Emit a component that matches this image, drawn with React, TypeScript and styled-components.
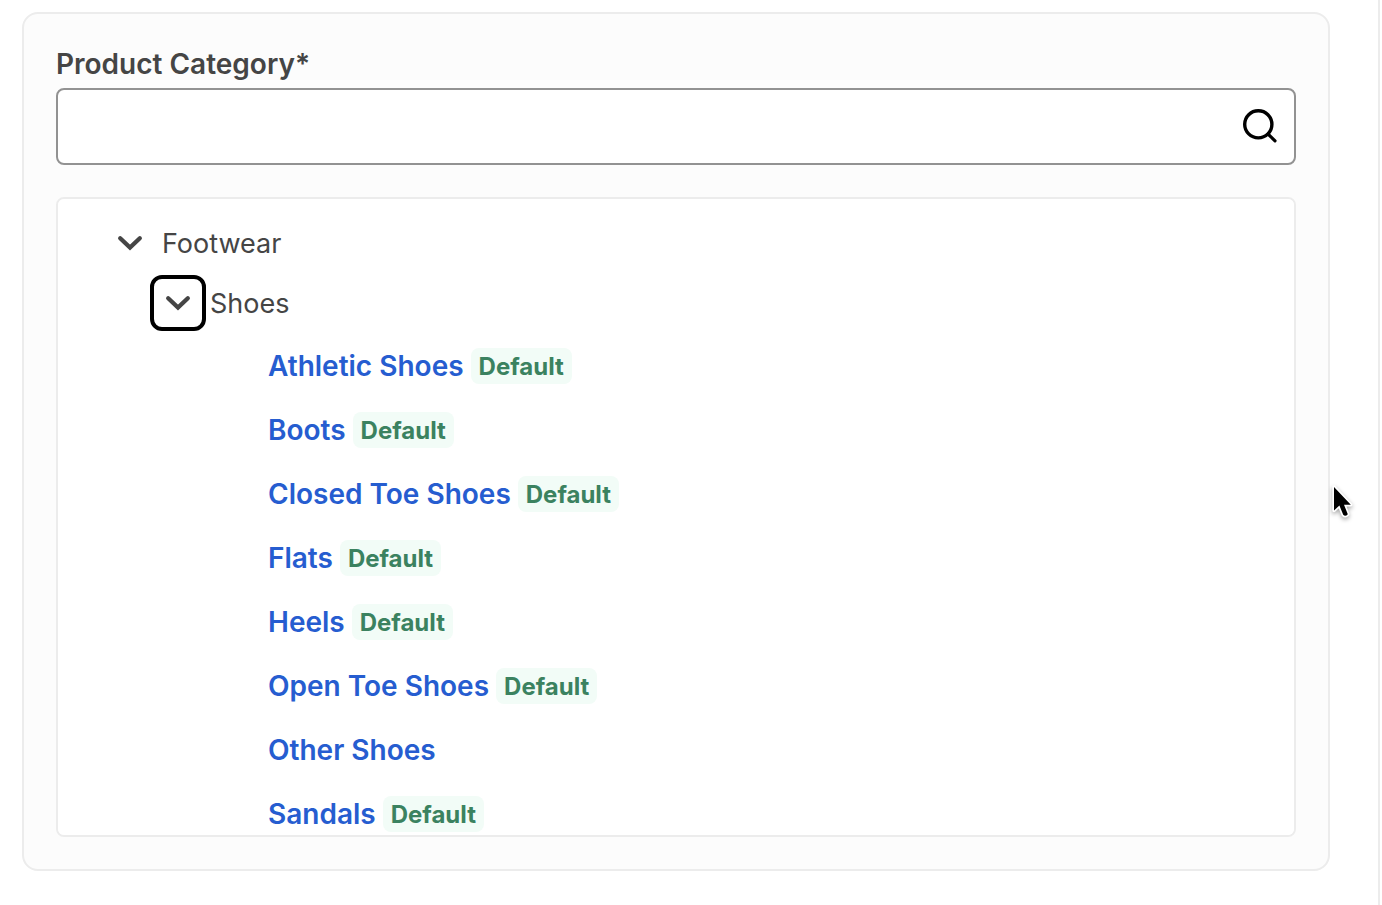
import React, { useState } from "react";
import styled, { createGlobalStyle } from "styled-components";

const GlobalStyle = createGlobalStyle`
  *, *::before, *::after { box-sizing: border-box; }
  body {
    margin: 0;
    background: #fff;
    color: #454545;
    font-family: Inter, "Liberation Sans", sans-serif;
    font-size: 28px;
    line-height: 36px;
  }
`;

const Page = styled.main`
  min-height: 100vh;
  margin-right: 2px;
  padding: 12px 48px 34px 22px;
  border-right: 2px solid #ececec;
`;

const Panel = styled.section`
  padding: 32px;
  background: #fcfcfc;
  border: 2px solid #ececec;
  border-radius: 16px;
`;

const Label = styled.label`
  display: block;
  margin-bottom: 6px;
  font-weight: 600;
`;

const SearchField = styled.div`
  display: flex;
  align-items: center;
  height: 77px;
  margin-bottom: 32px;
  padding-right: 16px;
  background: #fff;
  border: 2px solid #929292;
  border-radius: 8px;
`;

const SearchInput = styled.input`
  flex: 1;
  min-width: 0;
  height: 100%;
  padding: 0 16px;
  border: 0;
  outline: 0;
  background: transparent;
  color: inherit;
  font: inherit;
`;

const SearchButton = styled.button`
  display: flex;
  padding: 0;
  border: 0;
  background: none;
  color: #000;
  cursor: pointer;
`;

const Tree = styled.div`
  max-height: 640px;
  padding: 14px 44px;
  overflow-y: auto;
  scrollbar-width: none;
  background: #fff;
  border: 2px solid #ececec;
  border-radius: 8px;
`;

const Branch = styled.ul<{ $indent: number }>`
  margin: 0;
  padding: 0 0 0 ${(p) => p.$indent}px;
  list-style: none;
`;

const LeafList = styled(Branch)`
  padding-top: 1px;
`;

const BranchRow = styled.div`
  display: flex;
  align-items: center;
  gap: 4px;
  height: 60px;
`;

const BranchName = styled.span`
  padding-top: 2px;
  font-size: 27px;
`;

const Toggle = styled.button<{ $active?: boolean }>`
  display: grid;
  place-items: center;
  width: 56px;
  height: 56px;
  padding: 0;
  border: 4px solid ${(p) => (p.$active ? "#000" : "transparent")};
  border-radius: 12px;
  background: none;
  color: #454545;
  cursor: pointer;
`;

const Leaf = styled.li`
  display: flex;
  align-items: center;
  gap: 7px;
  height: 64px;
`;

const CategoryLink = styled.a`
  color: #265dd0;
  font-weight: 600;
  text-decoration: none;
`;

const Badge = styled.span`
  padding: 2px 8px 0;
  border-radius: 8px;
  background: #f2fcf7;
  color: #3b8260;
  font-size: 24px;
  font-weight: 700;
  line-height: 34px;
`;

const Pointer = styled.svg`
  position: absolute;
  top: 482px;
  right: 26px;
  filter: drop-shadow(0 2px 2px rgba(0, 0, 0, 0.35));
  pointer-events: none;
`;

const Chevron = () => (
  <svg width="26" height="16" viewBox="0 0 26 16" fill="none" aria-hidden="true">
    <path d="M3.2 3.2 13 12.6 22.8 3.2" stroke="currentColor" strokeWidth="4.3" strokeLinecap="round" />
  </svg>
);

const shoes = [
  { name: "Athletic Shoes", preset: true },
  { name: "Boots", preset: true },
  { name: "Closed Toe Shoes", preset: true },
  { name: "Flats", preset: true },
  { name: "Heels", preset: true },
  { name: "Open Toe Shoes", preset: true },
  { name: "Other Shoes", preset: false },
  { name: "Sandals", preset: true },
];

export default function App() {
  const [footwearOpen, setFootwearOpen] = useState(true);
  const [shoesOpen, setShoesOpen] = useState(true);

  return (
    <>
      <GlobalStyle />
      <Page>
        <Panel>
          <Label htmlFor="category">Product Category*</Label>
          <SearchField>
            <SearchInput id="category" type="text" />
            <SearchButton type="button" aria-label="Search">
              <svg width="36" height="37" viewBox="0 0 36 37" fill="none" aria-hidden="true">
                <circle cx="16.3" cy="16.3" r="13.6" stroke="currentColor" strokeWidth="3.4" />
                <path d="m26 26 7 6.8" stroke="currentColor" strokeWidth="3.2" strokeLinecap="round" />
              </svg>
            </SearchButton>
          </SearchField>
          <Tree>
            <Branch $indent={0}>
              <li>
                <BranchRow>
                  <Toggle
                    type="button"
                    aria-label="Toggle Footwear"
                    aria-expanded={footwearOpen}
                    onClick={() => setFootwearOpen(!footwearOpen)}
                  >
                    <Chevron />
                  </Toggle>
                  <BranchName>Footwear</BranchName>
                </BranchRow>
                {footwearOpen && (
                  <Branch $indent={48}>
                    <li>
                      <BranchRow>
                        <Toggle
                          type="button"
                          $active
                          aria-label="Toggle Shoes"
                          aria-expanded={shoesOpen}
                          onClick={() => setShoesOpen(!shoesOpen)}
                        >
                          <Chevron />
                        </Toggle>
                        <BranchName>Shoes</BranchName>
                      </BranchRow>
                      {shoesOpen && (
                        <LeafList $indent={118}>
                          {shoes.map((item) => (
                            <Leaf key={item.name}>
                              <CategoryLink href="#category">{item.name}</CategoryLink>
                              {item.preset && <Badge>Default</Badge>}
                            </Leaf>
                          ))}
                        </LeafList>
                      )}
                    </li>
                  </Branch>
                )}
              </li>
            </Branch>
          </Tree>
        </Panel>
      </Page>
      <Pointer width="26" height="38" viewBox="0 0 26 38" aria-hidden="true">
        <path
          d="M4 5V28.6L9.4 23.4 13.2 32.8Q15.4 35.2 17.8 32.2L14 22.8H20.8Z"
          fill="#000"
          stroke="#fff"
          strokeWidth="3.4"
          strokeLinejoin="round"
          paintOrder="stroke"
        />
      </Pointer>
    </>
  );
}
